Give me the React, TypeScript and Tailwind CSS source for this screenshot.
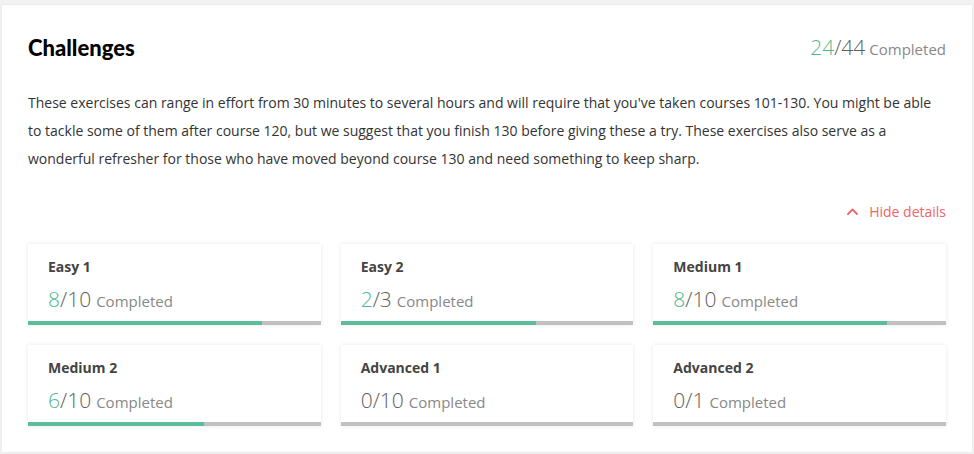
import React from "react";

const items = [
  { name: "Easy 1", done: 8, total: 10 },
  { name: "Easy 2", done: 2, total: 3 },
  { name: "Medium 1", done: 8, total: 10 },
  { name: "Medium 2", done: 6, total: 10 },
  { name: "Advanced 1", done: 0, total: 10 },
  { name: "Advanced 2", done: 0, total: 1 },
];

export default function App() {
  return (
    <div className="min-h-screen bg-[#f2f2f2] pt-[5px] pl-[2px] pr-[2px]" style={{ fontFamily: '"Open Sans", sans-serif' }}>
      <div className="bg-white w-[970px] h-[447px] shadow-[0_0_2px_rgba(0,0,0,0.08)] px-[26px] pt-[31px]">
        <div className="flex items-center justify-between h-[24px]">
          <h1 className="text-[22px] leading-[24px] font-black text-black" style={{ fontFamily: 'Lato, sans-serif' }}>Challenges</h1>
          <div className="flex items-baseline">
            <span className="text-[21px] font-light text-[#4fb892]">24</span>
            <span className="text-[21px] font-light text-[#5e5e5e]">/44</span>
            <span className="text-[15px] text-[#888] ml-[4px]">Completed</span>
          </div>
        </div>
        <p className="mt-[29px] text-[14px] leading-[28px] text-[#333]">
          These exercises can range in effort from 30 minutes to several hours and will require that you've taken courses 101-130. You might be able to tackle some of them after course 120, but we suggest that you finish 130 before giving these a try. These exercises also serve as a wonderful refresher for those who have moved beyond course 130 and need something to keep sharp.
        </p>
        <div className="mt-[29px] flex justify-end">
          <button className="flex items-center gap-[10px] text-[14px] leading-[20px] text-[#f06565]">
            <svg width="13" height="12" viewBox="0 0 13 12" fill="none" stroke="#f06565" strokeWidth="1.8" strokeLinecap="round" strokeLinejoin="round">
              <path d="M2 8 L6.5 3.5 L11 8" />
            </svg>
            Hide details
          </button>
        </div>
        <div className="mt-[22px] grid grid-cols-3 gap-x-[20px] gap-y-[20px]">
          {items.map((it) => {
            const pct = (it.done / it.total) * 100;
            return (
              <div key={it.name} className="h-[81px] bg-white shadow-[0_0_4px_rgba(0,0,0,0.1)] flex flex-col">
                <div className="px-[20px] pt-[13px] text-[14px] leading-[20px] font-bold text-[#444]">{it.name}</div>
                <div className="px-[20px] mt-[8px] flex items-baseline leading-[28px]">
                  <span className={`text-[21px] font-light ${it.done > 0 ? "text-[#4fb892]" : "text-[#5e5e5e]"}`}>{it.done}</span>
                  <span className="text-[21px] font-light text-[#5e5e5e]">/{it.total}</span>
                  <span className="text-[15px] text-[#888] ml-[5px]">Completed</span>
                </div>
                <div className="mt-auto h-[4px] bg-[#c0c0c0] flex">
                  <div className="h-full bg-[#5cbd9b]" style={{ width: `${pct}%` }} />
                </div>
              </div>
            );
          })}
        </div>
      </div>
    </div>
  );
}
